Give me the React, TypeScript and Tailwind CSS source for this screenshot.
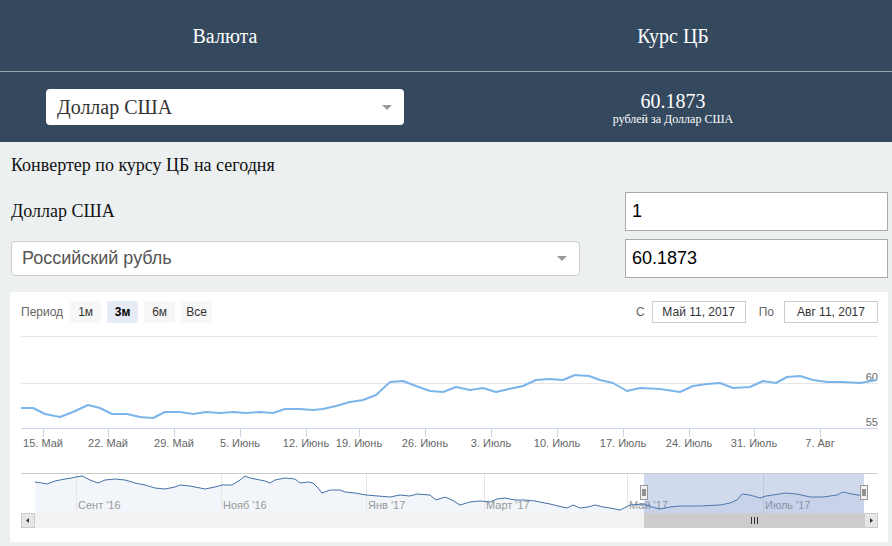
import React from "react";

const mainLine: [number, number][] = [
  [21, 408], [33, 408], [45, 414], [60, 417], [73, 412], [88, 405], [100, 408], [112, 414],
  [127, 414], [140, 417], [153, 418], [165, 412], [180, 412], [193, 414], [206, 412], [220, 413],
  [233, 412], [246, 413], [260, 412], [273, 413], [285, 409], [300, 409], [313, 410], [323, 409],
  [336, 406], [350, 402], [363, 400], [376, 395], [390, 382], [403, 381], [416, 386], [430, 391],
  [443, 392], [456, 387], [470, 390], [483, 388], [496, 392], [509, 389], [523, 386], [536, 380],
  [549, 379], [563, 380], [575, 375], [589, 376], [600, 380], [613, 383], [627, 391], [640, 388],
  [660, 389], [680, 392], [693, 386], [707, 384], [720, 383], [733, 388], [750, 387], [763, 381],
  [776, 383], [787, 377], [800, 376], [813, 380], [827, 382], [843, 382], [860, 383], [877, 380],
];

const navLine: [number, number][] = [
  [35, 482], [42, 483], [47, 484], [55, 481], [65, 479], [72, 478], [76, 477], [82, 476],
  [90, 480], [98, 483], [105, 480], [115, 479], [125, 480], [132, 482], [135, 483], [145, 485],
  [155, 488], [165, 489], [175, 487], [180, 485], [190, 486], [195, 487], [205, 489], [215, 487],
  [222, 485], [232, 485], [240, 480], [245, 476], [250, 478], [255, 479], [265, 481], [270, 483],
  [275, 480], [285, 478], [295, 479], [300, 483], [308, 482], [313, 483], [318, 488], [322, 493],
  [330, 490], [340, 490], [345, 492], [355, 493], [366, 495], [378, 496], [390, 497], [400, 495],
  [410, 496], [417, 494], [430, 495], [436, 500], [445, 497], [452, 500], [460, 505], [470, 502],
  [480, 501], [490, 502], [497, 499], [505, 498], [515, 500], [525, 500], [535, 501], [550, 504],
  [558, 506], [567, 508], [573, 505], [580, 508], [588, 507], [595, 505], [603, 507], [610, 508],
  [620, 510], [630, 505], [644, 504], [652, 507], [660, 509], [670, 507], [680, 506], [700, 506],
  [720, 505], [730, 503], [737, 500], [742, 494], [750, 495], [760, 498], [766, 496], [773, 495],
  [785, 493], [797, 494], [810, 497], [823, 497], [837, 495], [843, 492], [852, 494], [864, 496],
];

const weekTicks = [
  { x: 43, t: "15. Май" },
  { x: 108, t: "22. Май" },
  { x: 174, t: "29. Май" },
  { x: 240, t: "5. Июнь" },
  { x: 306, t: "12. Июнь" },
  { x: 359, t: "19. Июнь" },
  { x: 425, t: "26. Июнь" },
  { x: 491, t: "3. Июль" },
  { x: 557, t: "10. Июль" },
  { x: 623, t: "17. Июль" },
  { x: 689, t: "24. Июль" },
  { x: 754, t: "31. Июль" },
  { x: 820, t: "7. Авг" },
];

const navTicks = [
  { x: 76, t: "Сент '16" },
  { x: 221, t: "Нояб '16" },
  { x: 366, t: "Янв '17" },
  { x: 484, t: "Март '17" },
  { x: 627, t: "Май '17" },
  { x: 763, t: "Июль '17" },
];

const toPath = (pts: [number, number][]) =>
  pts.map((p, i) => (i === 0 ? "M" : "L") + p[0] + " " + p[1]).join(" ");

function Caret() {
  return (
    <svg width="10" height="5" viewBox="0 0 10 5">
      <path d="M0 0 L10 0 L5 5 Z" fill="#999" />
    </svg>
  );
}

function Handle({ x }: { x: number }) {
  return (
    <g>
      <rect x={x - 3.5} y={485.5} width={7} height={14} fill="#f2f2f2" stroke="#999" />
      <line x1={x - 1} y1={489} x2={x - 1} y2={496} stroke="#333" />
      <line x1={x + 1} y1={489} x2={x + 1} y2={496} stroke="#333" />
    </g>
  );
}

function Chart() {
  const navArea = toPath(navLine) + " L864 513 L35 513 Z";
  const font = "'Liberation Sans', Arial, sans-serif";
  return (
    <svg width="878" height="212" viewBox="10 330 878 212" className="block">
      <line x1="21" y1="336.5" x2="878" y2="336.5" stroke="#e6e6e6" />
      <line x1="21" y1="383.5" x2="878" y2="383.5" stroke="#e6e6e6" />
      <line x1="21" y1="428.5" x2="878" y2="428.5" stroke="#ccd6eb" />
      {weekTicks.map((w) => (
        <g key={w.t}>
          <line x1={w.x + 0.5} y1="428" x2={w.x + 0.5} y2="437" stroke="#ccd6eb" />
          <text x={w.x} y="447" textAnchor="middle" fontSize="11" fill="#666" fontFamily={font}>
            {w.t}
          </text>
        </g>
      ))}
      <text x="878" y="381" textAnchor="end" fontSize="11" fill="#666" fontFamily={font}>60</text>
      <text x="878" y="426" textAnchor="end" fontSize="11" fill="#666" fontFamily={font}>55</text>
      <path d={toPath(mainLine)} fill="none" stroke="#7cb5ec" strokeWidth="2" strokeLinejoin="round" />

      {/* navigator */}
      <path d={navArea} fill="rgba(69,114,167,0.07)" />
      {navTicks.map((n) => (
        <g key={n.t}>
          <line x1={n.x + 0.5} y1="473" x2={n.x + 0.5} y2="513" stroke="#e6e6e6" />
          <text x={n.x + 2} y="509" fontSize="11" fill="#999" fontFamily={font}>
            {n.t}
          </text>
        </g>
      ))}
      <path d={toPath(navLine)} fill="none" stroke="#4572a7" strokeWidth="1" />
      <rect x="644" y="473" width="220" height="40" fill="rgba(102,133,194,0.3)" />
      <line x1="21" y1="473.5" x2="878" y2="473.5" stroke="#cccccc" />

      {/* scrollbar */}
      <rect x="21" y="513" width="857" height="15" fill="#f2f2f2" />
      <rect x="644" y="513" width="220" height="15" fill="#cccccc" />
      <line x1="751.5" y1="517" x2="751.5" y2="524" stroke="#333" />
      <line x1="754.5" y1="517" x2="754.5" y2="524" stroke="#333" />
      <line x1="757.5" y1="517" x2="757.5" y2="524" stroke="#333" />
      <rect x="21.5" y="513.5" width="13" height="14" fill="#e6e6e6" stroke="#cccccc" />
      <path d="M26 520.5 L29 518 L29 523 Z" fill="#333" />
      <rect x="864.5" y="513.5" width="13" height="14" fill="#e6e6e6" stroke="#cccccc" />
      <path d="M873 520.5 L870 518 L870 523 Z" fill="#333" />

      <Handle x={644} />
      <Handle x={864} />
    </svg>
  );
}

export default function App() {
  const sans = "font-['Liberation_Sans',Arial,sans-serif]";
  const serif = "font-['Liberation_Serif','Times_New_Roman',serif]";
  return (
    <div className={`w-[892px] h-[546px] overflow-hidden bg-[#ecf0f1] ${serif}`}>
      {/* header */}
      <div className="bg-[#34495e] text-white">
        <div className="grid grid-cols-2 h-[72px] items-center border-b border-[#9ba5b0] text-[20px]">
          <div className="text-center pl-[4px]">Валюта</div>
          <div className="text-center pl-[8px]">Курс ЦБ</div>
        </div>
        <div className="grid grid-cols-2 h-[70px] items-center">
          <div className="pl-[46px]">
            <div className="w-[358px] h-[36px] bg-white rounded-[4px] flex items-center justify-between pl-[11px] pr-[12px] text-[20px] text-[#333]">
              <span>Доллар США</span>
              <Caret />
            </div>
          </div>
          <div className="flex flex-col items-center pt-[2px] pl-[8px]">
            <div className="text-[20px] leading-[22px]">60.1873</div>
            <div className="text-[12px] leading-[14px]">рублей за Доллар США</div>
          </div>
        </div>
      </div>

      {/* converter */}
      <div className="pl-[11px] pt-[11px]">
        <div className="text-[18px] leading-[24px] text-[#111]">Конвертер по курсу ЦБ на сегодня</div>
        <div className="mt-[15px] grid grid-cols-[569px_263px] gap-x-[45px] gap-y-[8px] items-center">
          <div className="text-[18px] text-[#111]">Доллар США</div>
          <div className={`h-[39px] bg-white border border-[#a9a9a9] flex items-center pl-[6px] text-[18px] text-black ${sans}`}>1</div>
          <div className={`h-[35px] bg-white border border-[#cccccc] rounded-[4px] flex items-center justify-between pl-[10px] pr-[12px] text-[18px] text-[#555] ${sans}`}>
            <span>Российский рубль</span>
            <Caret />
          </div>
          <div className={`h-[39px] bg-white border border-[#a9a9a9] flex items-center pl-[6px] text-[18px] text-black ${sans}`}>60.1873</div>
        </div>
      </div>

      {/* chart card */}
      <div className={`mt-[14px] ml-[10px] w-[878px] h-[250px] bg-white ${sans}`}>
        <div className="flex items-start justify-between pt-[9px] pl-[11px] pr-[10px] h-[38px] text-[12px]">
          <div className="flex items-center">
            <span className="text-[#666] mr-[7px]">Период</span>
            <div className="flex gap-[6px]">
              <div className="w-[31px] h-[22px] bg-[#f7f7f7] rounded-[2px] flex items-center justify-center text-[#333]">1м</div>
              <div className="w-[31px] h-[22px] bg-[#e6ebf5] rounded-[2px] flex items-center justify-center text-black font-bold">3м</div>
              <div className="w-[31px] h-[22px] bg-[#f7f7f7] rounded-[2px] flex items-center justify-center text-[#333]">6м</div>
              <div className="w-[31px] h-[22px] bg-[#f7f7f7] rounded-[2px] flex items-center justify-center text-[#333]">Все</div>
            </div>
          </div>
          <div className="flex items-center">
            <span className="text-[#666] mr-[7px]">С</span>
            <div className="w-[94px] h-[22px] border border-[#cccccc] flex items-center justify-center text-[#333]">Май 11, 2017</div>
            <span className="text-[#666] ml-[13px] mr-[10px]">По</span>
            <div className="w-[94px] h-[22px] border border-[#cccccc] flex items-center justify-center text-[#333]">Авг 11, 2017</div>
          </div>
        </div>
        <Chart />
      </div>
    </div>
  );
}
